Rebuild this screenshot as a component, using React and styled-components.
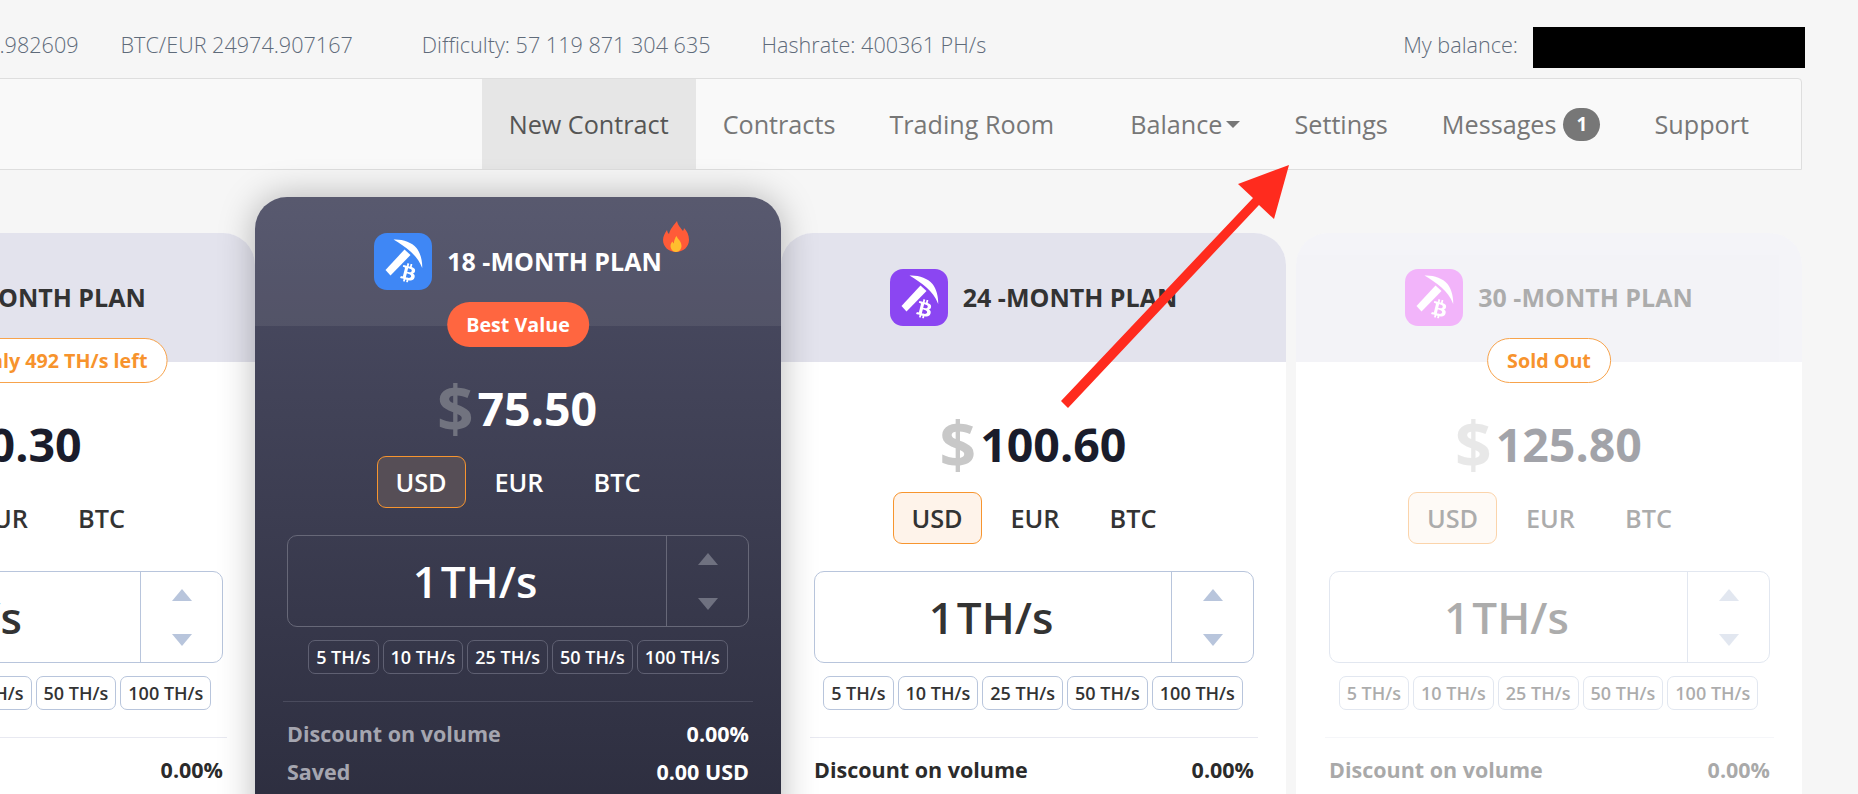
import React from 'react'
import styled, { createGlobalStyle } from 'styled-components'
import { FaBtc } from 'react-icons/fa'

const Global = createGlobalStyle`
  html, body {
    margin: 0;
    background: #f6f6f6;
    overflow: hidden;
    font-family: "Open Sans", "Liberation Sans", sans-serif;
  }
`

const Page = styled.div`
  position: relative;
  width: 1858px;
  height: 794px;
  overflow: hidden;
`

const TopBar = styled.div`
  display: flex;
  justify-content: flex-end;
  align-items: center;
  height: 78px;
  padding: 17px 53px 0 0;
  box-sizing: border-box;
  font-weight: 300;
  font-size: 21.6px;
  color: #5f6b7a;
  white-space: nowrap;
`
const Stats = styled.div`
  display: flex;
  flex-shrink: 0;
  gap: ${props => props.$gap}px;
  margin: 0 ${props => props.$after}px 6px 0;
`
const BalanceLabel = styled.span`
  margin: 0 15px 6px 0;
`
const Redacted = styled.div`
  flex-shrink: 0;
  width: 272px;
  height: 41px;
  background: #000;
`

const Nav = styled.nav`
  display: flex;
  justify-content: flex-end;
  height: 90px;
  margin: 0 56px 0 -2px;
  padding-right: 25px;
  background: #f9f9f9;
  border: 1px solid #dedede;
  border-top-right-radius: 4px;
`
const NavItem = styled.a`
  display: flex;
  align-items: center;
  gap: 7px;
  padding: 0 27px;
  margin-left: ${props => props.$shift || 0}px;
  font-size: 25.2px;
  color: ${props => props.$active ? '#555' : '#777'};
  background: ${props => props.$active ? '#e6e6e6' : 'transparent'};
`
const Caret = styled.span`
  width: 0;
  height: 0;
  margin-left: -3px;
  margin-top: 1px;
  border-left: 7px solid transparent;
  border-right: 7px solid transparent;
  border-top: 7px solid #777;
`
const Count = styled.span`
  display: flex;
  align-items: center;
  justify-content: center;
  width: 37px;
  height: 33px;
  border-radius: 17px;
  background: #777;
  color: #fff;
  font-size: 19px;
  font-weight: 700;
`

const Cards = styled.div`
  display: flex;
  justify-content: flex-end;
  align-items: flex-start;
  margin-top: 63px;
  padding-right: 56px;
`
const Card = styled.section`
  position: relative;
  flex-shrink: 0;
  width: ${props => props.$width}px;
  margin-top: ${props => props.$dark ? '-36px' : 0};
  margin-left: ${props => props.$gap || 0}px;
  border-radius: 32px 32px 0 0;
  background: ${props => props.$dark ? 'linear-gradient(180deg, #4c4d64 0%, #2c2d3e 100%)' : '#fff'};
  box-shadow: ${props => props.$dark ? '0 0 36px rgba(0, 0, 0, 0.28)' : 'none'};
  z-index: ${props => props.$dark ? 2 : 1};
`
const Header = styled.header`
  display: flex;
  align-items: center;
  justify-content: center;
  gap: 15px;
  height: 129px;
  border-radius: 32px 32px 0 0;
  background: ${props => props.$dark ? 'rgba(255, 255, 255, 0.07)' : '#e3e3ed'};
  opacity: ${props => props.$muted ? 0.4 : 1};
`
const IconBox = styled.div`
  flex-shrink: 0;
  width: 58px;
  height: 57px;
  border-radius: 13px;
  background: ${props => props.$color};
`
const Title = styled.h2`
  position: relative;
  margin: -2px 0 0;
  font-size: 25px;
  font-weight: 700;
  color: ${props => props.$dark ? '#fff' : '#333'};
`
const Flame = styled.svg`
  position: absolute;
  top: -23px;
  right: -27px;
  width: 26px;
  height: 31px;
`
const Badge = styled.div`
  position: absolute;
  top: 105px;
  left: 50%;
  transform: translateX(-50%);
  box-sizing: border-box;
  height: 45px;
  padding: 0 19px;
  display: flex;
  align-items: center;
  border-radius: 23px;
  white-space: nowrap;
  font-size: 19.7px;
  font-weight: 700;
  color: ${props => props.$dark ? '#fff' : '#f7932d'};
  background: ${props => props.$dark ? '#ff6640' : '#fff'};
  border: ${props => props.$dark ? 'none' : '1px solid #f7a34c'};
  z-index: 3;
`
const Body = styled.div`
  padding: 49px 32px 40px ${props => props.$dark ? 32 : 33}px;
  opacity: ${props => props.$muted ? 0.4 : 1};
`
const Price = styled.div`
  display: flex;
  align-items: center;
  justify-content: center;
  gap: 4px;
  height: 66px;
  padding-right: 2px;
  font-size: 46.5px;
  font-weight: 700;
  color: ${props => props.$dark ? '#fff' : '#1a1c2b'};
`
const Dollar = styled.span`
  font-size: 64px;
  line-height: 1;
  color: ${props => props.$dark ? '#71737f' : '#c8c8c8'};
`
const Tabs = styled.div`
  display: flex;
  justify-content: center;
  gap: 9px;
  margin: 15px 0 0 2px;
`
const Tab = styled.div`
  display: flex;
  align-items: center;
  justify-content: center;
  width: 89px;
  height: 52px;
  box-sizing: border-box;
  border-radius: 9px;
  font-size: 25.3px;
  font-weight: 600;
  color: ${props => props.$dark ? '#fff' : '#333'};
  border: 1px solid ${props => props.$active ? '#f7952f' : 'transparent'};
  background: ${props => !props.$active ? 'transparent' : props.$dark ? '#564e56' : '#fef3ea'};
`
const Spinner = styled.div`
  display: flex;
  height: 92px;
  margin-top: 27px;
  box-sizing: border-box;
  border-radius: 10px;
  border: 1px solid ${props => props.$dark ? '#676878' : '#b8c5dc'};
`
const SpinnerValue = styled.div`
  flex: 1;
  display: flex;
  align-items: center;
  justify-content: center;
  gap: 3px;
  padding-right: 4px;
  font-size: 44px;
  font-weight: 600;
  color: ${props => props.$dark ? '#fff' : '#333'};
`
const SpinnerArrows = styled.div`
  display: flex;
  flex-direction: column;
  align-items: center;
  justify-content: center;
  gap: 33px;
  width: 81px;
  border-left: 1px solid ${props => props.$dark ? '#676878' : '#b8c5dc'};
`
const Arrow = styled.span`
  width: 0;
  height: 0;
  border-left: 10px solid transparent;
  border-right: 10px solid transparent;
  ${props => props.$down ? 'border-top' : 'border-bottom'}: 12px solid ${props => props.$dark ? '#6f7180' : '#b8c5dc'};
`
const Chips = styled.div`
  display: flex;
  justify-content: center;
  gap: 4px;
  margin: 13px 0 0 ${props => props.$dark ? 0 : -2}px;
`
const Chip = styled.div`
  display: flex;
  align-items: center;
  height: 34px;
  padding: 0 7px;
  box-sizing: border-box;
  border-radius: 7px;
  white-space: nowrap;
  font-size: 18px;
  font-weight: 600;
  color: ${props => props.$dark ? '#fff' : '#333'};
  border: 1px solid ${props => props.$dark ? '#5f6072' : '#b8c5dc'};
`
const Divider = styled.hr`
  margin: 27px -4px 12px;
  height: 1px;
  border: 0;
  background: ${props => props.$dark ? '#4a4b5d' : '#e8e9f1'};
`
const Row = styled.div`
  display: flex;
  justify-content: space-between;
  align-items: center;
  height: 38px;
  font-size: 21.5px;
  font-weight: 700;
  color: ${props => props.$dark ? '#fff' : '#2b2b2b'};
`
const RowLabel = styled.span`
  color: ${props => props.$dark ? '#a5a6b0' : '#2b2b2b'};
`
const Pointer = styled.svg`
  position: absolute;
  left: 1050px;
  top: 155px;
  width: 250px;
  height: 265px;
  z-index: 5;
`

const chipValues = [5, 10, 25, 50, 100]

const PickIcon = () => (
  <svg viewBox="0 0 57 57" width="58" height="57">
    <path fill="#fff" d="M19 6.500C28 6 37 9 42 15c4 5 6 13 5.700 20-2.700-7-6.700-12-11.700-16.500C31 14 25 10 19 6.500z" />
    <path fill="#fff" d="M30 16.500l6 5.500L16 42.500l-5-5.500z" />
    <g transform="rotate(14 34 40)">
      <FaBtc x="24.500" y="30.500" size="19" color="#fff" />
    </g>
  </svg>
)

const plans = [
  { months: 12, price: '50.30', color: '#3f87f5', width: 506, badge: 'Last chance only 492 TH/s left' },
  { months: 18, price: '75.50', color: '#3f87f5', width: 526, badge: 'Best Value', dark: true, hot: true },
  { months: 24, price: '100.60', color: '#8b46f2', width: 505 },
  { months: 30, price: '125.80', color: '#e146f5', width: 506, badge: 'Sold Out', muted: true, gap: 10 },
]

function Plan({ plan }) {
  const { dark, muted } = plan
  return (
    <Card $dark={dark} $width={plan.width} $gap={plan.gap}>
      <Header $dark={dark} $muted={muted}>
        <IconBox $color={plan.color}><PickIcon /></IconBox>
        <Title $dark={dark}>
          {plan.months} -MONTH PLAN
          {plan.hot && (
            <Flame viewBox="0 0 26 31">
              <path fill="#ff5b38" d="M14 0c1 5 4 7 6 10 .6-1 1-2 1-3 3 3 5 7 5 12 0 7-6 12-13 12S0 26 0 19c0-4 2-7 4-10 .4 2 1 3 2 4C7 8 11 4 14 0z" />
              <path fill="#ffbe2e" d="M13.500 15c1 3 5 5 5 10 0 3-2.500 6-5.500 6s-5.500-3-5.500-6c0-2 1-3.500 2-4.500.3 1 .7 1.500 1.300 2 .2-3 1.200-5.500 2.700-7.500z" />
            </Flame>
          )}
        </Title>
      </Header>
      {plan.badge && <Badge $dark={dark}>{plan.badge}</Badge>}
      <Body $muted={muted} $dark={dark}>
        <Price $dark={dark}><Dollar $dark={dark}>$</Dollar>{plan.price}</Price>
        <Tabs>
          <Tab $dark={dark} $active>USD</Tab>
          <Tab $dark={dark}>EUR</Tab>
          <Tab $dark={dark}>BTC</Tab>
        </Tabs>
        <Spinner $dark={dark}>
          <SpinnerValue $dark={dark}><span>1</span><span>TH/s</span></SpinnerValue>
          <SpinnerArrows $dark={dark}>
            <Arrow $dark={dark} />
            <Arrow $dark={dark} $down />
          </SpinnerArrows>
        </Spinner>
        <Chips $dark={dark}>
          {chipValues.map(value => <Chip key={value} $dark={dark}>{value} TH/s</Chip>)}
        </Chips>
        <Divider $dark={dark} />
        <Row $dark={dark}><RowLabel $dark={dark}>Discount on volume</RowLabel><span>0.00%</span></Row>
        <Row $dark={dark}><RowLabel $dark={dark}>Saved</RowLabel><span>0.00 USD</span></Row>
      </Body>
    </Card>
  )
}

export default function App() {
  return (
    <Page>
      <Global />
      <TopBar>
        <Stats $gap={42} $after={69}>
          <span>BTC/USD 26982.982609</span>
          <span>BTC/EUR 24974.907167</span>
        </Stats>
        <Stats $gap={51} $after={417}>
          <span>Difficulty: 57 119 871 304 635</span>
          <span>Hashrate: 400361 PH/s</span>
        </Stats>
        <BalanceLabel>My balance:</BalanceLabel>
        <Redacted />
      </TopBar>
      <Nav>
        <NavItem $active>New Contract</NavItem>
        <NavItem>Contracts</NavItem>
        <NavItem>Trading Room</NavItem>
        <NavItem $shift={22}>Balance<Caret /></NavItem>
        <NavItem>Settings</NavItem>
        <NavItem>Messages<Count>1</Count></NavItem>
        <NavItem>Support</NavItem>
      </Nav>
      <Cards>
        {plans.map(plan => <Plan key={plan.months} plan={plan} />)}
      </Cards>
      <Pointer viewBox="1050 155 250 265">
        <polygon fill="#ff2b1e" points="1289,165 1238,184 1253,198 1061,401 1068,408 1259,205 1274,219" />
      </Pointer>
    </Page>
  )
}
